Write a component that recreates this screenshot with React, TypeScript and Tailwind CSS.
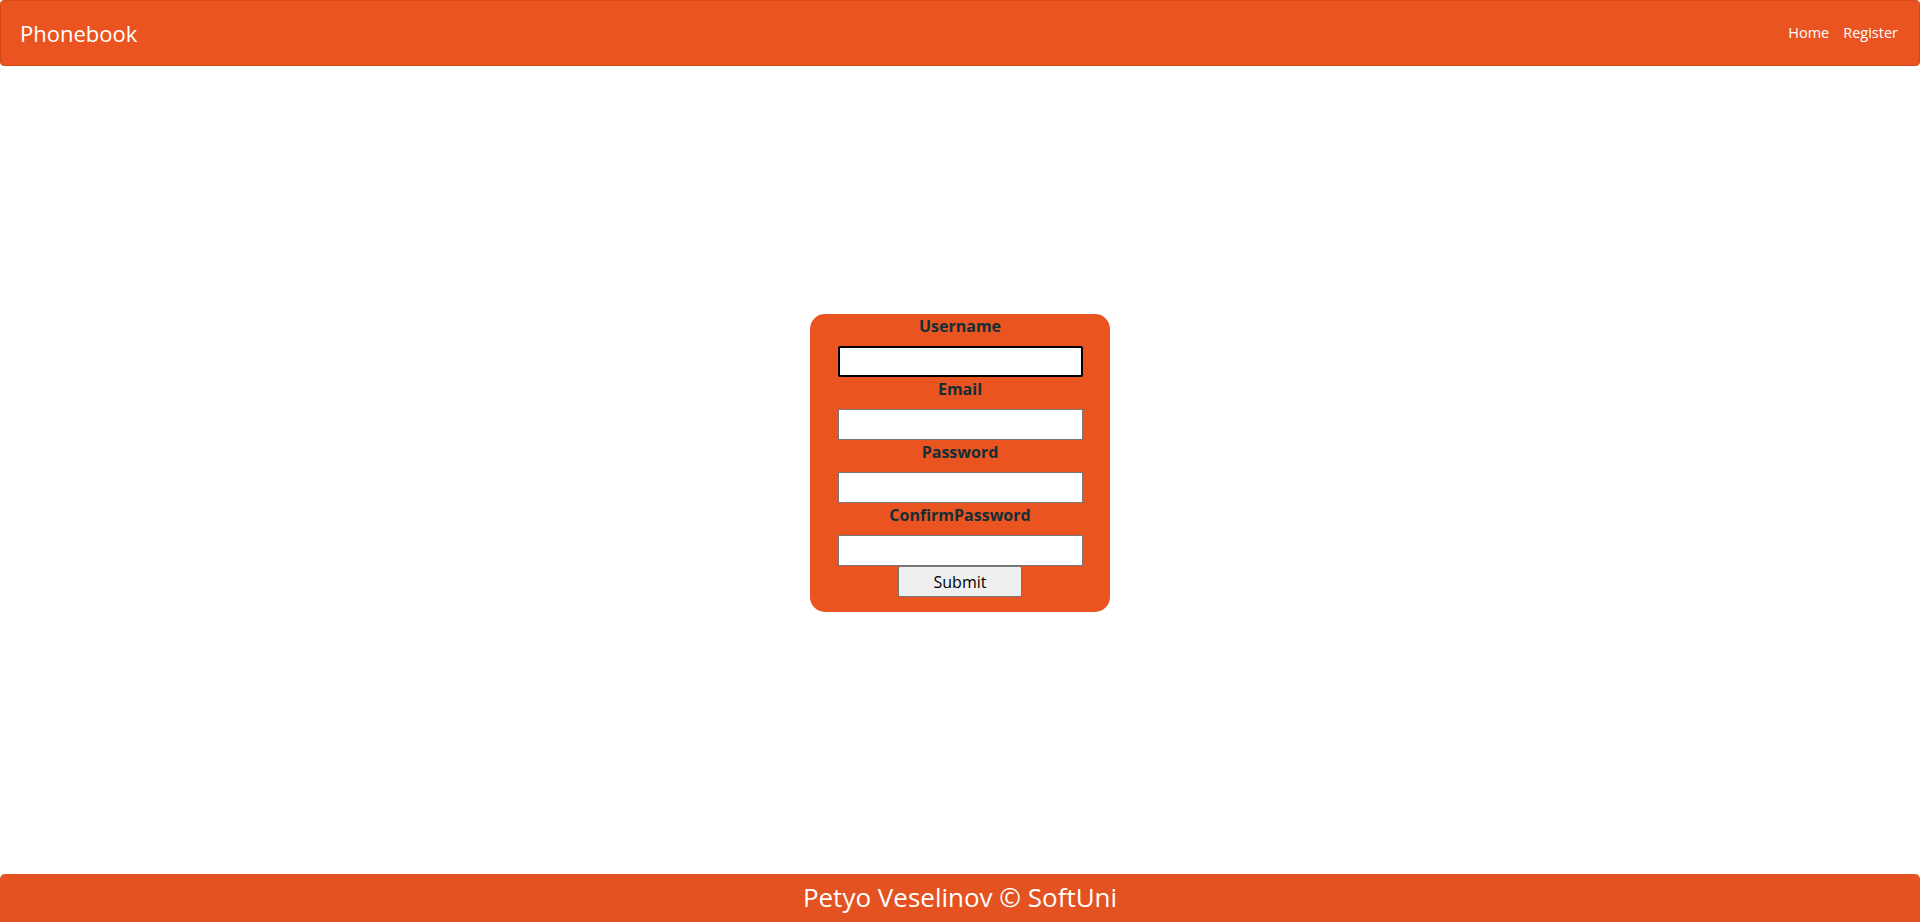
const fields = ['Username', 'Email', 'Password', 'ConfirmPassword'];

export default function App() {
  return (
    <div className="flex h-[922px] flex-col bg-white font-['Open_Sans',sans-serif]">
      {/* Navbar */}
      <nav className="flex h-[66px] items-center justify-between rounded-[4px] border border-[#d34a16] bg-[#e95420] pl-[19px] pr-[21px]">
        <span className="text-[22px] text-white">Phonebook</span>
        <div className="flex items-center gap-[14px] text-[14.5px] text-white">
          <a href="#">Home</a>
          <a href="#">Register</a>
        </div>
      </nav>

      {/* Register form */}
      <main className="flex flex-1 items-center justify-center pb-[14px]">
        <form className="flex w-[300px] flex-col items-center rounded-[15px] bg-[#e95420] pb-[15px]">
          {fields.map((f, i) => (
            <div key={f} className="flex flex-col items-center">
              <label className="mb-2 text-[16px] leading-[24px] font-bold text-[#142e35]">{f}</label>
              <input
                type={f.includes('Password') ? 'password' : 'text'}
                autoFocus={i === 0}
                className="h-[31px] w-[245px] border border-[#767676] bg-white px-1 outline-none focus:rounded-[2px] focus:border-2 focus:border-black"
              />
            </div>
          ))}
          <button
            type="button"
            className="h-[31px] w-[124px] rounded-[2px] border border-[#767676] bg-[#efefef] text-[16px] text-black"
          >
            Submit
          </button>
        </form>
      </main>

      {/* Footer */}
      <footer className="flex h-[48px] items-center justify-center rounded-t-[5px] bg-[#e35220] pb-[2px] text-[26px] text-white">
        Petyo Veselinov © SoftUni
      </footer>
    </div>
  );
}
